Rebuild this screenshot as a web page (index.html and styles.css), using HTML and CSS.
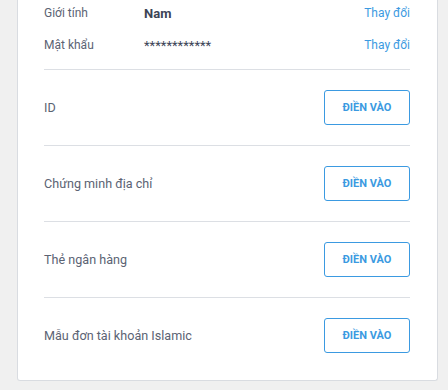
FILE: index.html
```html
<!DOCTYPE html>
<html lang="vi">
<head>
	<meta charset="UTF-8">
	<title>Tài khoản</title>
	<link rel="stylesheet" href="styles.css">
</head>
<body>
	<div class="card">
		<ul class="info">
			<li class="info_row">
				<span class="info_label">Giới tính</span>
				<span class="info_value">Nam</span>
				<a href="#" class="info_link">Thay đổi</a>
			</li>
			<li class="info_row">
				<span class="info_label">Mật khẩu</span>
				<span class="info_value info_pass">************</span>
				<a href="#" class="info_link">Thay đổi</a>
			</li>
		</ul>
		<ul class="docs">
			<li class="doc_row">
				<span class="doc_name">ID</span>
				<a href="#" class="doc_btn">ĐIỀN VÀO</a>
			</li>
			<li class="doc_row">
				<span class="doc_name">Chứng minh địa chỉ</span>
				<a href="#" class="doc_btn">ĐIỀN VÀO</a>
			</li>
			<li class="doc_row">
				<span class="doc_name">Thẻ ngân hàng</span>
				<a href="#" class="doc_btn">ĐIỀN VÀO</a>
			</li>
			<li class="doc_row">
				<span class="doc_name">Mẫu đơn tài khoản Islamic</span>
				<a href="#" class="doc_btn">ĐIỀN VÀO</a>
			</li>
		</ul>
	</div>
</body>
</html>
```

FILE: styles.css
```css
/* 默认样式 */
*{ margin:0; padding:0; box-sizing:border-box;}
html,body{ background:#f0f0f0;}
body{ font-family:Roboto,"Noto Sans",Arial,sans-serif; font-size:13px; color:#5b6373;}
li{ list-style:none;}
a{ text-decoration:none;}

.card{ width:421px; margin:-3px 0 0 17px; padding:0 27px 7px 26px; background:#fff; border:1px solid #d9dce1; border-top:0; border-radius:0 0 3px 3px;}

.info{ padding-bottom:8px;}
.info_row{ display:flex; align-items:center; height:32px; font-size:12px;}
.info_label{ width:100px; color:#5b6373;}
.info_value{ flex:1; color:#3c4456; font-weight:bold; font-size:13px;}
.info_pass{ font-weight:normal; font-size:13px;}
.info_link{ color:#3b9ae1; font-size:12px;}

.doc_row{ display:flex; align-items:center; justify-content:space-between; padding:20px 0; border-top:1px solid #dcdfe4;}
.doc_name{ color:#5b6373; font-size:12.6px;}
.doc_btn{ display:flex; align-items:center; justify-content:center; width:86px; height:35px; border:1px solid #3b9ae1; border-radius:3px; color:#3b9ae1; font-size:11px; font-weight:bold;}
```
